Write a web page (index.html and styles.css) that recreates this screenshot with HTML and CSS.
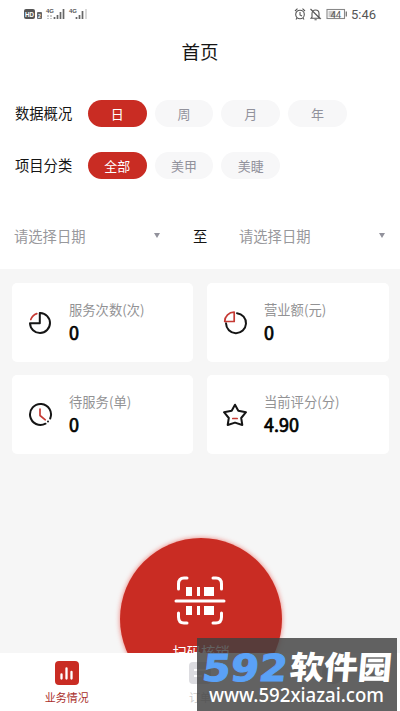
FILE: index.html
```html
<!DOCTYPE html>
<html lang="zh-CN">
<head>
<meta charset="utf-8">
<title>首页</title>
<link rel="stylesheet" href="styles.css">
</head>
<body>
<div class="screen">
  <header class="status">
    <svg class="status-left" width="66" height="16" viewBox="0 0 66 16">
      <rect x="0" y="3" width="11" height="10" rx="2" fill="#555"/>
      <text x="1" y="10.500" class="hd" textLength="9" lengthAdjust="spacingAndGlyphs">HD</text>
      <rect x="13" y="6" width="5" height="7" rx="1" fill="#666"/>
      <text x="14" y="12" class="sim">2</text>
      <text x="22" y="7" class="net">4G</text>
      <path d="M24 9v4M27 9v4" stroke="#999" stroke-width="1" stroke-dasharray="2 1"/>
      <path d="M30.500 11v2M33.500 9v4M36.500 6v7M39.500 3v10" stroke="#666" stroke-width="1.700"/>
      <text x="45" y="7" class="net">4G</text>
      <path d="M52.500 11v2M55.500 9v4M58.500 5v8" stroke="#666" stroke-width="1.700"/>
      <path d="M62 3v10" stroke="#ccc" stroke-width="1.500"/>
    </svg>
    <div class="status-right">
      <svg width="54" height="14" viewBox="0 0 54 14" fill="none" stroke="#555" stroke-width="1.100">
        <circle cx="7" cy="7.500" r="4.300"/><path d="M7 5v3l2 1M2 4l2.500-2.300M12 4L9.500 1.700M4 11l-1 1.500M10 11l1 1.500"/>
        <path d="M19 10V6.500a3.500 3.500 0 0 1 7 0V10l1.200 1.300H18zM21.500 12.800h2.200M17.500 2l10 10"/>
        <rect x="34" y="2.500" width="17.500" height="9" stroke="#888"/><rect x="35.500" y="4" width="7" height="6" fill="#ccc" stroke="none"/>
        <path d="M53.300 4.500v5" stroke="#777" stroke-width="1.300"/>
        <text x="37.500" y="10.500" class="battery">44</text>
      </svg>
      <span class="time">5:46</span>
    </div>
  </header>
  <h1 class="title">首页</h1>
  <div class="filter">
    <span class="filter-label">数据概况</span>
    <div class="pills"><span class="pill active">日</span><span class="pill">周</span><span class="pill">月</span><span class="pill">年</span></div>
  </div>
  <div class="filter">
    <span class="filter-label">项目分类</span>
    <div class="pills"><span class="pill active">全部</span><span class="pill">美甲</span><span class="pill">美睫</span></div>
  </div>
  <div class="dates">
    <div class="date"><span>请选择日期</span><i class="caret"></i></div>
    <span class="to">至</span>
    <div class="date"><span>请选择日期</span><i class="caret"></i></div>
  </div>
  <main class="main">
    <div class="cards">
      <section class="card">
        <svg class="icon" viewBox="0 0 26 26"><path d="M13.300 3A10 10 0 1 1 3 13.300H12.800V3Z" class="ink"/><path d="M3.800 9.500A10 10 0 0 1 9.800 3.600" class="red"/></svg>
        <div><div class="label">服务次数(次)</div><div class="value">0</div></div>
      </section>
      <section class="card">
        <svg class="icon" viewBox="0 0 26 26"><path d="M15 3.200A10 10 0 1 1 4 13.300" class="ink"/><path d="M12.200 2.200V11.500H2.700A9.400 9.400 0 0 1 12.200 2.200Z" class="red"/></svg>
        <div><div class="label">营业额(元)</div><div class="value">0</div></div>
      </section>
      <section class="card">
        <svg class="icon" viewBox="0 0 26 26"><path d="M18.500 21.700A10.500 10.500 0 1 1 23.200 16.500" class="ink"/><circle cx="21" cy="19.500" r="1" fill="#151515"/><path d="M13 7V13.500L18.300 17.800" class="red"/></svg>
        <div><div class="label">待服务(单)</div><div class="value">0</div></div>
      </section>
      <section class="card">
        <svg class="icon" viewBox="0 0 26 26"><path d="M13 2.700L16.300 8.800L24 10.200L19.200 16L20.300 23L13 20.600L5.700 23L6.800 16L2 10.200L9.700 8.800Z" class="ink"/><path d="M10.800 16.500H15.200" class="red"/></svg>
        <div><div class="label">当前评分(分)</div><div class="value">4.90</div></div>
      </section>
    </div>
    <button class="scan" type="button">
      <svg width="52" height="50" viewBox="0 0 52 50" fill="none" stroke="#fff" stroke-width="3" stroke-linecap="round">
        <path d="M4.500 13V8Q4.500 2 10 2H13M39 2H42Q47.500 2 47.500 8V13M4.500 37V41Q4.500 47 10 47H13M39 47H42Q47.500 47 47.500 41V37M2 25H50"/>
        <path d="M12 11h6v9h-6zM23 11h3v9h-3zM30 11h10v9H30zM12 30h6v9h-6zM23 30h3v9h-3zM30 30h10v9H30z" fill="#fff" stroke="none"/>
      </svg>
      <span>扫码核销</span>
    </button>
  </main>
  <nav class="tabs">
    <div class="tab selected">
      <svg width="24" height="24" viewBox="0 0 24 24"><rect width="24" height="24" rx="4" fill="#c92c23"/><path d="M6.500 13.500v4M11.500 7.500v10M16.500 11v6.500" stroke="#fff" stroke-width="2.300" stroke-linecap="round"/></svg>
      <span>业务情况</span>
    </div>
    <div class="tab">
      <svg width="24" height="24" viewBox="0 0 24 24"><rect x="1" y="1" width="22" height="22" rx="4" fill="#dcdce0"/><path d="M6 9h12M6 15h8" stroke="#fff" stroke-width="2"/></svg>
      <span>订单</span>
    </div>
    <div class="tab">
      <svg width="24" height="24" viewBox="0 0 24 24"><circle cx="12" cy="12" r="11" fill="#dcdce0"/></svg>
    </div>
  </nav>
  <aside class="mark">
    <svg width="200" height="73" viewBox="0 0 200 73">
      <text class="digits" transform="translate(4 43) skewX(-7)" textLength="85" lengthAdjust="spacingAndGlyphs">592</text>
      <text class="brand" transform="translate(92 41) skewX(-5)" textLength="102" lengthAdjust="spacingAndGlyphs">软件园</text>
      <text class="site" x="12" y="63.500" textLength="175" lengthAdjust="spacingAndGlyphs">www.592xiazai.com</text>
    </svg>
  </aside>
</div>
</body>
</html>
```
FILE: styles.css
```css
* { box-sizing: border-box; }
body { margin: 0; font-family: "Noto Sans CJK SC", sans-serif; color: #151515; }
.screen { position: relative; display: flex; flex-direction: column; width: 400px; height: 711px; overflow: hidden; background: #fff; }
.status { display: flex; justify-content: space-between; height: 28px; padding: 6px 24px 0; }
.hd { font: bold 7px "Liberation Sans", sans-serif; fill: #fff; }
.sim { font: bold 5px "Liberation Sans", sans-serif; fill: #fff; }
.net { font: bold 6px "Liberation Sans", sans-serif; fill: #555; }
.battery { font: 9.500px Roboto, sans-serif; fill: #555; stroke: none; }
.status-right { display: flex; gap: 4px; }
.status-right svg { margin-top: 1px; }
.time { font: 13px/17px Roboto, sans-serif; color: #555; }
.title { height: 47px; margin: 0; font-size: 18.500px; font-weight: 400; line-height: 47px; text-align: center; }
.filter { display: flex; align-items: center; height: 52px; padding-left: 15px; }
.title + .filter { margin-top: 12px; }
.filter-label { width: 73px; font-size: 14.300px; line-height: 20px; white-space: nowrap; }
.pills { display: flex; gap: 8px; }
.pill { width: 58.700px; height: 27px; border-radius: 14px; background: #f7f7f8; color: #92929c; font-size: 13px; line-height: 27px; text-align: center; }
.pill.active { background: #c92c23; color: #fff; }
.dates { display: flex; align-items: center; height: 78px; padding: 11px 14px 0 14px; font-size: 14.300px; line-height: 20px; }
.date { display: flex; align-items: center; justify-content: space-between; width: 146px; color: #98989c; }
.to { width: 79px; padding-left: 33px; }
.caret { border: 3.500px solid transparent; border-top: 5px solid #92929c; border-bottom: 0; }
.main { flex: 1; min-height: 0; padding: 14px 11px 0 12px; background: #f6f6f6; }
.cards { display: grid; grid-template-columns: 181px 182px; grid-auto-rows: 78.500px; gap: 13.500px 14px; }
.card { display: flex; align-items: center; padding-left: 14.500px; border-radius: 5px; background: #fff; }
.icon { width: 26px; height: 26px; margin: 2px 16.500px 0 0; }
.ink, .red { fill: none; stroke-width: 2; stroke-linejoin: round; stroke-linecap: round; }
.ink { stroke: #151515; }
.red { stroke: #c53a34; stroke-width: 1.700; }
.label { font-size: 13.300px; line-height: 20px; color: #929294; }
.value { font-size: 18px; font-weight: 400; line-height: 25px; color: #000; -webkit-text-stroke: 0.700px #000; }
.scan { display: flex; flex-direction: column; align-items: center; width: 162px; height: 162px; margin: 84px 0 0 108px; padding: 38px 0 0; border: 0; border-radius: 50%; background: #c92c23; box-shadow: 0 0 5px rgba(230, 40, 30, .6); color: #fff; font: 14.300px/20px "Noto Sans CJK SC", sans-serif; }
.scan svg { margin-right: 2px; }
.scan span { margin-top: 16px; }
.tabs { position: relative; display: flex; flex: 0 0 58px; background: #fff; }
.tab { display: flex; flex: 1; flex-direction: column; align-items: center; padding-top: 8px; font-size: 11px; line-height: 16px; color: #ccc; }
.tab span { margin-top: 4px; }
.tab.selected { color: #a92e2b; }
.mark { position: absolute; left: 197px; top: 638px; width: 200px; height: 73px; background: rgba(63, 63, 63, .82); }
.mark svg { display: block; }
.digits { font: bold 37px "DejaVu Sans", sans-serif; fill: #5aa1f7; stroke: #5aa1f7; stroke-width: 1; }
.brand { font: 900 32px "Noto Sans CJK SC", sans-serif; fill: #fff; }
.site { font: 500 19px "Noto Sans", sans-serif; fill: #fff; }
```
